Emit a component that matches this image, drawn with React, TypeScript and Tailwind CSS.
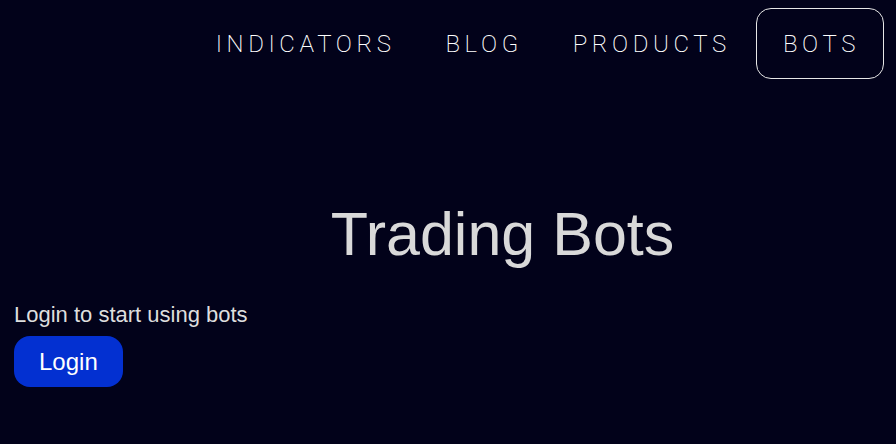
import React from 'react'

const links = ['INDICATORS', 'BLOG', 'PRODUCTS']

export default function App() {
  return (
    <div className="min-h-screen w-full bg-[#02021a] text-[#dcdcdc] font-['Liberation_Sans',Arial,sans-serif]">
      {/* nav */}
      <nav className="flex items-center justify-end pt-[8px] pr-[12px] font-['Roboto',sans-serif] font-extralight">
        {links.map((l) => (
          <a key={l} className="px-[25px] py-[19px] text-2xl tracking-[4.6px] text-white cursor-pointer">
            {l}
          </a>
        ))}
        <a className="rounded-[15px] border border-[#e6e6e6] pl-[26px] pr-[23px] py-[18.5px] text-2xl tracking-[4.6px] text-white cursor-pointer">
          BOTS
        </a>
      </nav>

      {/* hero */}
      <h1 className="mt-[125px] pl-[109px] text-center text-[61px] leading-[60px] text-[#d9d9d9]">Trading Bots</h1>

      <div className="mt-[37px] px-[14px]">
        <p className="text-[22px] leading-[28px] text-[#dedede]">Login to start using bots</p>
        <button className="mt-[7px] h-[51px] rounded-[16px] bg-[#0330d1] px-[25px] text-2xl text-white">
          Login
        </button>
      </div>
    </div>
  )
}
